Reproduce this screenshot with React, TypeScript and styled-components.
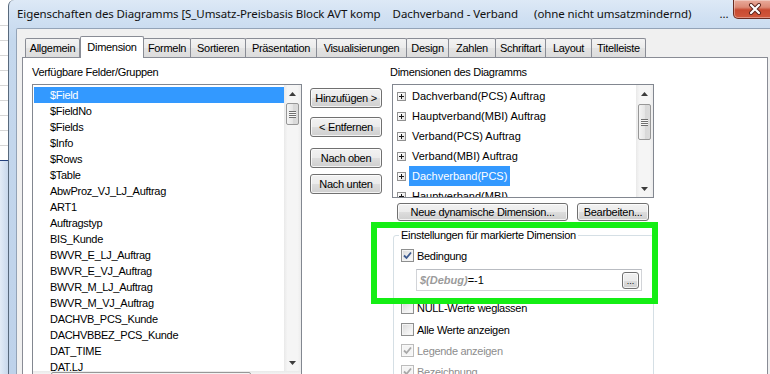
import React from "react";
import styled, { createGlobalStyle, css } from "styled-components";

const GlobalStyle = createGlobalStyle`
  html, body { margin: 0; padding: 0; background: #ffffff; }
  body { overflow: hidden; font-family: "Liberation Sans", Arial, sans-serif; font-size: 11px; color: #000; }
  *, *::before, *::after { box-sizing: border-box; }
`;

const Screen = styled.div`
  position: relative;
  display: flex;
  width: 770px;
  height: 374px;
  overflow: hidden;
  background: #fff;
`;

const BackWindow = styled.div`
  flex: none;
  width: 8px;
  height: 100%;
  background:
    linear-gradient(#24407c, #24407c) 0 160px / 100% 1px no-repeat,
    linear-gradient(to right, #e3ecf7, #c8d8ec) 0 161px / 100% 100% no-repeat,
    repeating-linear-gradient(to bottom, transparent 0 14px, #d6d6d6 14px 15px) 0 11px / 100% 149px no-repeat,
    #ffffff;
`;

const Dialog = styled.div`
  flex: none;
  width: 775px;
  height: 100%;
  display: flex;
  flex-direction: column;
  padding: 0 7px;
  border-left: 1px solid #58697c;
  border-top-left-radius: 6px;
  background: linear-gradient(to bottom, #dde9f6 0px, #d0e0f2 18px, #c5d8ed 40px, #bed2ea 100%);
`;

const TitleBar = styled.div`
  flex: none;
  height: 28px;
  display: flex;
  align-items: center;
  padding-left: 1px;
`;

const TitleText = styled.span<{ $gap?: number }>`
  flex: none;
  margin-left: ${(p) => p.$gap ?? 0}px;
  font-family: "Noto Sans", "Open Sans", sans-serif;
  font-size: 11.5px;
  letter-spacing: -0.1px;
  line-height: 16px;
  white-space: nowrap;
  color: #111;
`;

const CloseButton = styled.div`
  align-self: flex-start;
  margin-left: auto;
  flex: none;
  width: 43px;
  height: 19px;
  border: 1px solid #6a2c22;
  border-top: none;
  border-radius: 0 0 5px 5px;
  background: linear-gradient(to bottom, #e9ab9b 0%, #dc8a76 40%, #c84a31 55%, #d1583c 100%);
  box-shadow: inset 0 0 0 1px rgba(255, 255, 255, 0.35);
  display: flex;
  align-items: center;
  justify-content: center;
`;

const Client = styled.div`
  flex: 1;
  display: flex;
  flex-direction: column;
  background: #f0f0f0;
  border: 1px solid #93a3b7;
  border-bottom: none;
  border-top-left-radius: 2px;
  padding: 7px 7px 0 5px;
  min-height: 0;
`;

const TabStrip = styled.div`
  flex: none;
  display: flex;
  align-items: flex-end;
  height: 21px;
  padding-left: 3px;
`;

const Tab = styled.div<{ $w: number; $active?: boolean }>`
  flex: none;
  width: ${(p) => p.$w}px;
  height: 19px;
  margin-left: -1px;
  border: 1px solid #898c95;
  border-bottom: none;
  border-radius: 2px 2px 0 0;
  background: linear-gradient(to bottom, #f3f3f3 0%, #ebebeb 50%, #e3e3e3 51%, #dcdcdc 100%);
  text-align: center;
  line-height: 18px;
  letter-spacing: -0.3px;
  white-space: nowrap;
  &:first-child { margin-left: 0; }
  ${(p) =>
    p.$active &&
    css`
      position: relative;
      z-index: 2;
      height: 22px;
      margin-left: 0;
      margin-bottom: -1px;
      background: #ffffff;
      line-height: 20px;
    `}
`;

const Panel = styled.div`
  flex: 1;
  width: 746px;
  display: flex;
  align-items: flex-start;
  background: #ffffff;
  border: 1px solid #898c95;
  padding: 8px 0 0 9px;
  letter-spacing: -0.3px;
`;

const Column = styled.div<{ $w: number; $ml?: number }>`
  flex: none;
  width: ${(p) => p.$w}px;
  margin-left: ${(p) => p.$ml ?? 0}px;
  display: flex;
  flex-direction: column;
  align-items: flex-start;
`;

const Label = styled.div`
  height: 13px;
  line-height: 13px;
  white-space: nowrap;
`;

const ListBox = styled.div`
  margin-top: 5px;
  width: 270px;
  height: 305px;
  border: 1px solid #828790;
  background: #fff;
  display: flex;
  flex-direction: column;
`;

const ListBody = styled.div`
  flex: 1;
  display: flex;
  min-height: 0;
`;

const ListItems = styled.div`
  flex: 1;
  overflow: hidden;
  padding: 2px 0 0 1px;
`;

const ListItem = styled.div<{ $selected?: boolean }>`
  height: 16px;
  line-height: 16px;
  padding-left: 16px;
  white-space: nowrap;
  ${(p) =>
    p.$selected &&
    css`
      background: #3399ff;
      color: #fff;
    `}
`;

const VScroll = styled.div`
  flex: none;
  width: 17px;
  display: flex;
  flex-direction: column;
  background: linear-gradient(to right, #e9e9e9 0%, #f5f5f5 20%, #f5f5f5 80%, #ececec 100%);
`;

const HScroll = styled.div`
  flex: none;
  height: 17px;
  display: flex;
  background: linear-gradient(to bottom, #e9e9e9 0%, #f5f5f5 20%, #f5f5f5 80%, #ececec 100%);
`;

const ScrollArrow = styled.div`
  flex: none;
  width: 17px;
  height: 17px;
  display: flex;
  align-items: center;
  justify-content: center;
`;

const ScrollTrack = styled.div<{ $horizontal?: boolean }>`
  flex: 1;
  display: flex;
  flex-direction: ${(p) => (p.$horizontal ? "row" : "column")};
`;

const Thumb = styled.div<{ $offset: number; $size: number; $horizontal?: boolean }>`
  flex: none;
  border: 1px solid #979797;
  border-radius: 2px;
  display: flex;
  align-items: center;
  justify-content: center;
  ${(p) =>
    p.$horizontal
      ? css`
          margin-left: ${p.$offset}px;
          width: ${p.$size}px;
          height: 15px;
          margin-top: 1px;
          background: linear-gradient(to bottom, #f4f4f4, #e6e6e6 50%, #d8d8d8 51%, #dcdcdc);
        `
      : css`
          margin-top: ${p.$offset}px;
          height: ${p.$size}px;
          width: 13px;
          margin-left: 2px;
          background: linear-gradient(to right, #f4f4f4, #e6e6e6 50%, #d8d8d8 51%, #dcdcdc);
        `}
`;

const Grip = styled.div`
  width: 7px;
  height: 7px;
  background: repeating-linear-gradient(to bottom, #6f6f6f 0 1px, #f8f8f8 1px 2px);
`;

const ButtonStack = styled.div`
  display: flex;
  flex-direction: column;
`;

const Button = styled.div<{ $w: number; $h?: number; $mt?: number }>`
  flex: none;
  width: ${(p) => p.$w}px;
  height: ${(p) => p.$h ?? 20}px;
  margin-top: ${(p) => p.$mt ?? 0}px;
  border: 1px solid #707070;
  border-radius: 3px;
  background: linear-gradient(to bottom, #f2f2f2 0%, #ebebeb 50%, #dddddd 51%, #cfcfcf 100%);
  box-shadow: inset 0 0 0 1px rgba(255, 255, 255, 0.75);
  display: flex;
  align-items: center;
  justify-content: center;
  white-space: nowrap;
`;

const TreeBox = styled.div`
  margin: 5px 0 0 2px;
  width: 262px;
  height: 114px;
  border: 1px solid #828790;
  background: #fff;
  display: flex;
`;

const TreeItems = styled.div`
  flex: 1;
  overflow: hidden;
  padding: 1px 0 0 4px;
  letter-spacing: 0;
`;

const TreeItem = styled.div`
  height: 20px;
  display: flex;
  align-items: center;
  white-space: nowrap;
`;

const PlusBox = styled.span`
  flex: none;
  width: 9px;
  height: 9px;
  border: 1px solid #919191;
  background: linear-gradient(135deg, #ffffff, #e2e2e2);
  display: flex;
  align-items: center;
  justify-content: center;
`;

const TreeLabel = styled.span<{ $selected?: boolean }>`
  margin-left: 3px;
  padding: 0 3px;
  height: 20px;
  line-height: 20px;
  ${(p) =>
    p.$selected &&
    css`
      background: #3399ff;
      color: #fff;
    `}
`;

const ButtonRow = styled.div`
  margin: 5px 0 0 7px;
  display: flex;
  gap: 9px;
`;

const GroupBox = styled.fieldset`
  margin: 8px 0 0 3px;
  width: 261px;
  height: 200px;
  padding: 7px 0 0 7px;
  border: 1px solid #d5dfe5;
  border-radius: 3px;
  min-width: 0;
`;

const Legend = styled.legend`
  padding: 0 2px;
  margin-left: -2px;
  line-height: 13px;
  height: 13px;
`;

const CheckRow = styled.div<{ $mt?: number; $disabled?: boolean }>`
  display: flex;
  align-items: center;
  height: 13px;
  margin-top: ${(p) => p.$mt ?? 0}px;
  white-space: nowrap;
  color: ${(p) => (p.$disabled ? "#8d8d8d" : "#000")};
`;

const CheckBox = styled.span<{ $disabled?: boolean }>`
  flex: none;
  width: 13px;
  height: 13px;
  margin-right: 3px;
  border: 1px solid ${(p) => (p.$disabled ? "#bcbcbc" : "#8e8f8f")};
  background: ${(p) =>
    p.$disabled ? "#f4f4f4" : "linear-gradient(135deg, #d8d8d8 0%, #f0f0f0 60%, #fdfdfd 100%)"};
  box-shadow: inset 0 0 0 1px ${(p) => (p.$disabled ? "#f8f8f8" : "#f3f3f3")};
  display: flex;
  align-items: center;
  justify-content: center;
`;

const ExprField = styled.div`
  margin: 7px 0 0 15px;
  width: 226px;
  height: 22px;
  border: 1px solid #d2d4d8;
  border-top-color: #b9bcc2;
  background: #ffffff;
  display: flex;
  align-items: center;
  padding: 0 2px 0 3px;
  letter-spacing: 0;
`;

const ExprText = styled.span`
  flex: 1;
  white-space: nowrap;
`;

const ExprVar = styled.span`
  color: #9b9b9b;
  font-weight: bold;
  font-style: italic;
`;

const SmallButton = styled.div`
  flex: none;
  width: 17px;
  height: 17px;
  border: 1px solid #707070;
  border-radius: 3px;
  background: linear-gradient(to bottom, #f2f2f2 0%, #ebebeb 50%, #dddddd 51%, #cfcfcf 100%);
  box-shadow: inset 0 0 0 1px rgba(255, 255, 255, 0.75);
  display: flex;
  align-items: flex-end;
  justify-content: center;
  padding-bottom: 3px;
  font-size: 9px;
  line-height: 8px;
`;

const Highlight = styled.div`
  position: absolute;
  left: 371px;
  top: 222px;
  width: 287px;
  height: 82px;
  border: 6px solid #14ee14;
  pointer-events: none;
`;

const ArrowIcon = ({ dir }: { dir: "up" | "down" | "left" | "right" }) => {
  const pts =
    dir === "up"
      ? "0,4 3.5,0 7,4"
      : dir === "down"
      ? "0,0 7,0 3.5,4"
      : dir === "left"
      ? "4,0 4,7 0,3.5"
      : "0,0 0,7 4,3.5";
  const w = dir === "up" || dir === "down" ? 7 : 4;
  const h = dir === "up" || dir === "down" ? 4 : 7;
  return (
    <svg width={w} height={h} viewBox={`0 0 ${w} ${h}`}>
      <polygon points={pts} fill="#3c3c3c" />
    </svg>
  );
};

const CheckMark = ({ color }: { color: string }) => (
  <svg width="9" height="9" viewBox="0 0 9 9">
    <path d="M1 4.5 L3.5 7 L8 1.5" fill="none" stroke={color} strokeWidth="1.8" />
  </svg>
);

const PlusIcon = () => (
  <svg width="7" height="7" viewBox="0 0 7 7">
    <path d="M1 3.5 H6 M3.5 1 V6" stroke="#1a1a1a" strokeWidth="1" shapeRendering="crispEdges" />
  </svg>
);

const CloseIcon = () => (
  <svg width="14" height="12" viewBox="0 0 14 12">
    <path d="M3 2 L11 10 M11 2 L3 10" stroke="#5a231b" strokeWidth="4" strokeLinecap="round" />
    <path d="M3 2 L11 10 M11 2 L3 10" stroke="#ffffff" strokeWidth="2.2" strokeLinecap="round" />
  </svg>
);

const tabs = [
  { t: "Allgemein", w: 55 },
  { t: "Dimension", w: 64, active: true },
  { t: "Formeln", w: 48 },
  { t: "Sortieren", w: 56 },
  { t: "Präsentation", w: 72 },
  { t: "Visualisierungen", w: 91 },
  { t: "Design", w: 43 },
  { t: "Zahlen", w: 48 },
  { t: "Schriftart", w: 51 },
  { t: "Layout", w: 47 },
  { t: "Titelleiste", w: 55 },
];

const fields = [
  "$Field",
  "$FieldNo",
  "$Fields",
  "$Info",
  "$Rows",
  "$Table",
  "AbwProz_VJ_LJ_Auftrag",
  "ART1",
  "Auftragstyp",
  "BIS_Kunde",
  "BWVR_E_LJ_Auftrag",
  "BWVR_E_VJ_Auftrag",
  "BWVR_M_LJ_Auftrag",
  "BWVR_M_VJ_Auftrag",
  "DACHVB_PCS_Kunde",
  "DACHVBBEZ_PCS_Kunde",
  "DAT_TIME",
  "DAT.LJ",
];

const dims = [
  "Dachverband(PCS) Auftrag",
  "Hauptverband(MBI) Auftrag",
  "Verband(PCS) Auftrag",
  "Verband(MBI) Auftrag",
  "Dachverband(PCS)",
  "Hauptverband(MBI)",
];

export default function App() {
  return (
    <>
      <GlobalStyle />
      <Screen>
        <BackWindow />
        <Dialog>
          <TitleBar>
            <TitleText>Eigenschaften des Diagramms [S_Umsatz-Preisbasis Block AVT komp</TitleText>
            <TitleText $gap={12}>Dachverband - Verband</TitleText>
            <TitleText $gap={16}>(ohne nicht umsatzmindernd)</TitleText>
            <TitleText $gap={28}>...</TitleText>
            <CloseButton>
              <CloseIcon />
            </CloseButton>
          </TitleBar>
          <Client>
            <TabStrip>
              {tabs.map((t) => (
                <Tab key={t.t} $w={t.w} $active={t.active}>
                  {t.t}
                </Tab>
              ))}
            </TabStrip>
            <Panel>
              <Column $w={270}>
                <Label>Verfügbare Felder/Gruppen</Label>
                <ListBox>
                  <ListBody>
                    <ListItems>
                      {fields.map((f, i) => (
                        <ListItem key={f} $selected={i === 0}>
                          {f}
                        </ListItem>
                      ))}
                    </ListItems>
                    <VScroll>
                      <ScrollArrow>
                        <ArrowIcon dir="up" />
                      </ScrollArrow>
                      <ScrollTrack>
                        <Thumb $offset={1} $size={22}>
                          <Grip />
                        </Thumb>
                      </ScrollTrack>
                      <ScrollArrow>
                        <ArrowIcon dir="down" />
                      </ScrollArrow>
                    </VScroll>
                  </ListBody>
                  <HScroll>
                    <ScrollArrow>
                      <ArrowIcon dir="left" />
                    </ScrollArrow>
                    <ScrollTrack $horizontal>
                      <Thumb $horizontal $offset={1} $size={200} />
                    </ScrollTrack>
                    <ScrollArrow>
                      <ArrowIcon dir="right" />
                    </ScrollArrow>
                  </HScroll>
                </ListBox>
              </Column>
              <Column $w={72} $ml={8}>
                <ButtonStack>
                  <Button $w={72} $mt={22}>Hinzufügen &gt;</Button>
                  <Button $w={72} $mt={9}>&lt; Entfernen</Button>
                  <Button $w={72} $mt={11}>Nach oben</Button>
                  <Button $w={72} $mt={6}>Nach unten</Button>
                </ButtonStack>
              </Column>
              <Column $w={268} $ml={8}>
                <Label>Dimensionen des Diagramms</Label>
                <TreeBox>
                  <TreeItems>
                    {dims.map((d, i) => (
                      <TreeItem key={i}>
                        <PlusBox>
                          <PlusIcon />
                        </PlusBox>
                        <TreeLabel $selected={i === 4}>{d}</TreeLabel>
                      </TreeItem>
                    ))}
                  </TreeItems>
                  <VScroll>
                    <ScrollArrow>
                      <ArrowIcon dir="up" />
                    </ScrollArrow>
                    <ScrollTrack>
                      <Thumb $offset={2} $size={36}>
                        <Grip />
                      </Thumb>
                    </ScrollTrack>
                    <ScrollArrow>
                      <ArrowIcon dir="down" />
                    </ScrollArrow>
                  </VScroll>
                </TreeBox>
                <ButtonRow>
                  <Button $w={171} $h={18}>Neue dynamische Dimension...</Button>
                  <Button $w={72} $h={18}>Bearbeiten...</Button>
                </ButtonRow>
                <GroupBox>
                  <Legend>Einstellungen für markierte Dimension</Legend>
                  <CheckRow>
                    <CheckBox>
                      <CheckMark color="#3d5a8f" />
                    </CheckBox>
                    Bedingung
                  </CheckRow>
                  <ExprField>
                    <ExprText>
                      <ExprVar>$(Debug)</ExprVar>=-1
                    </ExprText>
                    <SmallButton>...</SmallButton>
                  </ExprField>
                  <CheckRow $mt={10}>
                    <CheckBox />
                    NULL-Werte weglassen
                  </CheckRow>
                  <CheckRow $mt={9}>
                    <CheckBox />
                    Alle Werte anzeigen
                  </CheckRow>
                  <CheckRow $mt={8} $disabled>
                    <CheckBox $disabled>
                      <CheckMark color="#a8a8a8" />
                    </CheckBox>
                    Legende anzeigen
                  </CheckRow>
                  <CheckRow $mt={8} $disabled>
                    <CheckBox $disabled>
                      <CheckMark color="#a8a8a8" />
                    </CheckBox>
                    Bezeichnung
                  </CheckRow>
                </GroupBox>
              </Column>
            </Panel>
          </Client>
        </Dialog>
        <Highlight />
      </Screen>
    </>
  );
}
